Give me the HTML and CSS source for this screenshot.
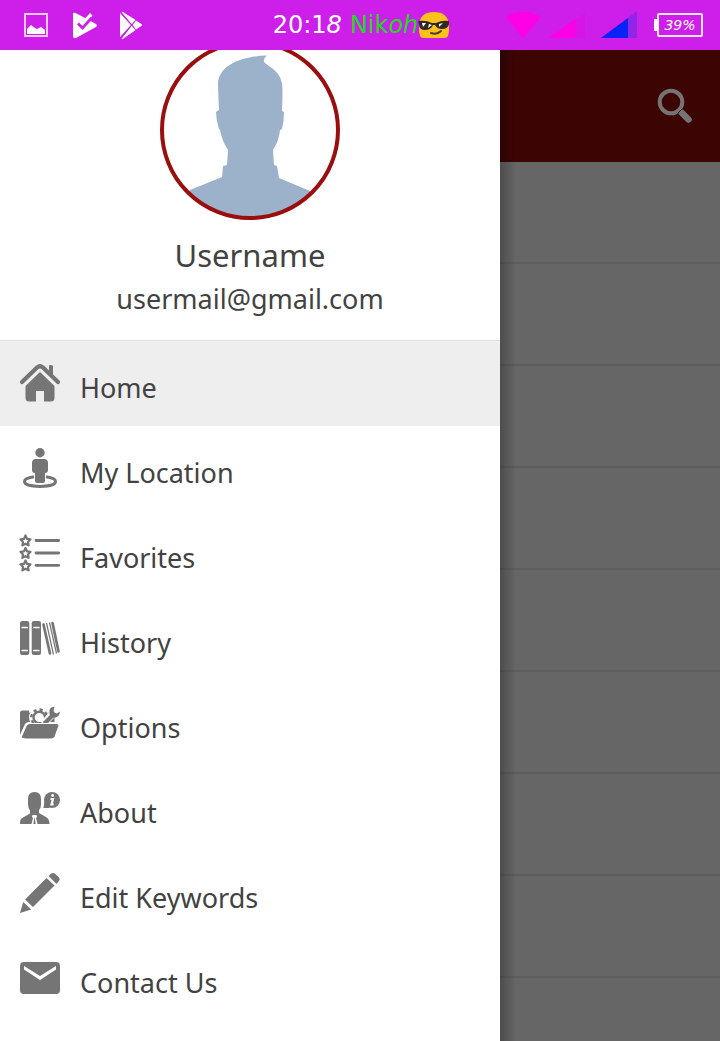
FILE: index.html
```html
<!DOCTYPE html>
<html lang="en">
<head>
<meta charset="utf-8">
<meta name="viewport" content="width=device-width, initial-scale=1">
<title>Navigation drawer</title>
<link rel="stylesheet" href="styles.css">
</head>
<body>
<div class="screen">
  <header class="status">
    <div class="status-left">
      <svg width="32" height="32" viewBox="0 0 32 32"><rect x="5" y="5" width="22" height="22" fill="none" stroke="#f3c8fb" stroke-width="2"/><path d="M7 25v-5l4-4 4 3 2 1 4-2 4 3v4z" fill="#fff"/></svg>
      <svg width="32" height="32" viewBox="0 0 32 32"><path d="M5 5q0-2 2.500-1L16 8.500 17.500 9 22 4l2.500 2.500-3 5L28 15q2 1.500 0 3L8 29q-3 1-3-2z" fill="#fff"/><path d="M10 14.500l4.500 4.500L24 8.500" fill="none" stroke="#cd1fe9" stroke-width="2.800"/></svg>
      <svg width="32" height="32" viewBox="0 0 32 32"><path d="M4 4l11 12L4 28z" fill="#fff"/><path d="M6 3l13 8-3 4zM6 30l13-9-3-4zM20 12l6 4-6 4-3-4z" fill="#fff" stroke="#fff"/><path d="M5 4l14 16M5 29l14-17" stroke="#cd1fe9" stroke-width="1"/></svg>
    </div>
    <div class="clock">
      <span>20:1<i>8</i></span><span class="nick">Nik<i>oh</i></span>
      <svg width="32" height="28" viewBox="0 0 32 28"><path d="M1 16C1 5 7 1 16 1s15 4 15 15-2 11-6 11H7c-4 0-6 0-6-11z" fill="#fcc21b"/><path d="M0 10q8-1 14 2h4q6-3 13-2v3q-1 5-7 5-5 0-7-4h-2q-2 5-8 5-6 0-6-6z" fill="#302821"/><path d="M4 12l4 0-3 4zM11 13l3 1-4 3zM21 13l4-1-4 4z" fill="#fff"/><path d="M13 22q6 2 10-2" fill="none" stroke="#513f35" stroke-width="2" stroke-linecap="round"/></svg>
    </div>
    <div class="status-right">
      <svg width="35" height="27" viewBox="0 0 35 27"><path d="M0 5q17-11 35 0L17 26z" fill="#ff00e6"/></svg>
      <svg width="36" height="28" viewBox="0 0 36 28"><path d="M0 27L36 2v25z" fill="#d914e8"/><path d="M0 27L26 8v19z" fill="#ff00e6"/></svg>
      <svg class="signal-two" width="36" height="28" viewBox="0 0 36 28"><path d="M0 27L36 0v27z" fill="#9126e9"/><path d="M0 27L27 7v20z" fill="#0723f5"/></svg>
      <span class="battery">39%</span>
    </div>
  </header>
  <div class="body">
    <aside class="drawer">
      <section class="profile">
        <svg class="avatar" viewBox="0 0 180 180" role="img" aria-label="Profile picture">
          <defs><clipPath id="round"><circle cx="90" cy="90" r="88"/></clipPath></defs>
          <path clip-path="url(#round)" d="M107 15.500q-4 3-3 6.500c6 6 15 8 18 21q1 6 0 28l2 1q0 9-2 17l-2 1q-1 11-7 20l1 15 3 1 2 12 31 13 30 29H0l30-30 32-13 1-11 4-1 1-15q-6-9-8-20l-1-1q-3-9-3-17l3-2q-1-21-1-27C60 23 86 16 107 15.500z" fill="#9cb1ca"/>
          <circle cx="90" cy="90" r="88" fill="none" stroke="#990f0f" stroke-width="4"/>
        </svg>
        <h1 class="name">Username</h1>
        <p class="mail">usermail@gmail.com</p>
      </section>
      <nav class="menu">
        <a class="item active" href="#home">
          <svg viewBox="0 0 40 40"><path d="M2 19L17 4.500q3-2.500 6 0L38 19" fill="none" stroke="#757575" stroke-width="4.200" stroke-linecap="round" stroke-linejoin="round"/><path d="M29 3q0-1 1.500-1T33 3v12l-4-4zM20 9l14.500 14v12q0 3.500-4 3.500H24V28h-8v10.500H9.500q-4 0-4-3.500V23z"/></svg>
          <span>Home</span></a>
        <a class="item" href="#location">
          <svg viewBox="0 0 40 40"><circle cx="20" cy="4.700" r="4.700"/><path d="M12 15q0-4 4-4h8q4 0 4 4v7q0 3-3 3v8q0 2-2 2h-6q-2 0-2-2v-8q-3 0-3-3z"/><path d="M14 28.800c-7 1-9.500 3-9.500 4.700 0 6.500 31 6.500 31 0 0-1.700-2.500-3.700-9.500-4.700" fill="none" stroke="#757575" stroke-width="3"/></svg>
          <span>My Location</span></a>
        <a class="item" href="#favorites">
          <svg viewBox="0 0 40 40"><defs><path id="star" d="M5.500 0l1.500 3.300 3.500.5-2.500 2.600.6 3.500-3.100-1.700-3.100 1.700.6-3.500L.5 3.800 4 3.300z" fill="none" stroke="#757575" stroke-width="2.200" stroke-linejoin="round"/></defs><use href="#star" x="0" y="2.500"/><use href="#star" x="0" y="15"/><use href="#star" x="0" y="27.500"/><path d="M16 7.500h22.700M16 20h22.700M16 32.300h22.700" stroke="#757575" stroke-width="2.800" stroke-linecap="round"/></svg>
          <span>Favorites</span></a>
        <a class="item" href="#history">
          <svg viewBox="0 0 40 40"><rect y="3" width="9.300" height="34" rx="2.200"/><rect x="11.700" y="3" width="9.300" height="34" rx="2.200"/><path d="M2.200 9.500h5M2.200 32.500h5M13.900 9.500h5M13.900 32.500h5" stroke="#fff" stroke-width="1.700" stroke-linecap="round"/><path d="M23.500 6.500l6.500 29M32.500 5l6 28.500" stroke="#757575" stroke-width="2.700" stroke-linecap="round"/><path d="M26.500 5l7 31.500M29.500 4.500l7 31" stroke="#757575" stroke-width="1.200"/></svg>
          <span>History</span></a>
        <a class="item" href="#options">
          <svg viewBox="0 0 40 40"><g transform="translate(0 4)"><path d="M0 28V6q0-2.500 2.500-2.500H9l2 2h22q1.500 0 1.500 2V15H9q-3 0-4.500 3z"/><path d="M9 0h31v5.500H9z" fill="#fff"/><circle cx="19.300" cy="10.500" r="10.300" fill="#fff"/><circle cx="19.300" cy="10.500" r="5.800" fill="none" stroke="#757575" stroke-width="2.400"/><circle cx="19.300" cy="10.500" r="8" fill="none" stroke="#757575" stroke-width="2.400" stroke-dasharray="3.200 3.083"/><path d="M23 17L35 5" stroke="#fff" stroke-width="7"/><path d="M24 17L35 6" stroke="#757575" stroke-width="4.300"/><path d="M34.500-.5q-6 1-5 6 0 6 6 5 4-1 4.500-6l-3.200 2-3-1v-3z"/><path d="M6 32q-6 0-4.500-3L6 19q1-2.500 4-2.500h26q4 0 2.800 3L35 30q-1 2-4 2z" stroke="#fff" stroke-width="1.200"/></g></svg>
          <span>Options</span></a>
        <a class="item" href="#about">
          <svg viewBox="0 0 40 40"><path d="M8 11q0-7 6.500-7T21 11v5q0 4-2 6v3l7 4q3.500 2 3.500 7H0V34q0-3 3-4.500l7-4v-3Q8 20 8 16z"/><path d="M12.500 27h4l.5 2-1 1 1.500 6h-6l1.500-6-1-1z" fill="#fff"/><path d="M14.500 29l1.200 7h-2.400z"/><circle cx="32" cy="12" r="8"/><path d="M24.500 13l-1 7h6z"/><circle cx="32.600" cy="7.500" r="1.400" fill="#fff"/><path d="M30.500 11H33l-1.500 5.500h2.200" fill="none" stroke="#fff" stroke-width="2.200"/></svg>
          <span>About</span></a>
        <a class="item" href="#keywords">
          <svg viewBox="0 0 40 40"><path d="M28.500 3L31 .7q2-1.400 4 0l4 3.800q1.500 1.500 0 3.500L36.500 11zM26.500 5l8 7.500L13 34l-8-7.500zM3.200 29l8 7.500L0 40z"/></svg>
          <span>Edit Keywords</span></a>
        <a class="item" href="#contact">
          <svg viewBox="0 0 40 40"><rect y="4" width="40" height="32" rx="4"/><path d="M4 8l16 10L36 8v3.500L20 22 4 11.500z" fill="#fff"/></svg>
          <span>Contact Us</span></a>
      </nav>
    </aside>
    <main class="page">
      <div class="toolbar">
        <button class="search" type="button" aria-label="Search"><svg width="38" height="38" viewBox="0 0 38 38"><circle cx="15" cy="15" r="11.300" fill="none" stroke="#747474" stroke-width="4"/><path d="M26 26l6.500 6.500" stroke="#747474" stroke-width="6.500" stroke-linecap="round"/><path d="M21.500 26.500l5-5" stroke="#3d0404" stroke-width="1"/></svg></button>
      </div>
      <ul class="list"><li></li><li></li><li></li><li></li><li></li><li></li><li></li><li></li><li></li></ul>
    </main>
  </div>
</div>
</body>
</html>
```
FILE: styles.css
```css
* { box-sizing: border-box; }

body {
  margin: 0;
  font-family: "Noto Sans", "Open Sans", sans-serif;
  color: #424242;
}

.screen {
  display: flex;
  flex-direction: column;
  height: 100vh;
  overflow: hidden;
}

.status {
  flex: none;
  display: grid;
  grid-template-columns: 1fr auto 1fr;
  align-items: center;
  height: 50px;
  padding: 0 17px 0 20px;
  background: #cd1fe9;
  color: #fff;
}

.status svg { display: block; }

.status-left { display: flex; gap: 16px; }

.clock {
  display: flex;
  align-items: center;
  font-family: "DejaVu Sans", sans-serif;
  font-size: 24px;
  line-height: 32px;
}

.nick { margin-left: 8px; color: #1edb1e; }

.status-right {
  display: flex;
  align-items: center;
  justify-content: flex-end;
  gap: 8px;
}

.signal-two { margin: 0 12px 0 8px; }

.battery {
  position: relative;
  width: 46px;
  border: 2px solid #fbe6ff;
  border-radius: 2px;
  font-family: "DejaVu Sans", sans-serif;
  font-size: 14px;
  font-style: italic;
  line-height: 20px;
  text-align: center;
}

.battery::before {
  content: "";
  position: absolute;
  left: -5px;
  top: 4px;
  width: 4px;
  height: 12px;
  background: #fff;
}

.body {
  flex: 1;
  min-height: 0;
  display: grid;
  grid-template-columns: minmax(0, 500px) minmax(0, 1fr);
}

.drawer { overflow: hidden; background: #fff; }

.profile {
  display: flex;
  flex-direction: column;
  align-items: center;
  margin-top: -10px;
  padding-bottom: 20px;
  border-bottom: 1px solid #e0e0e0;
}

.avatar { width: 180px; height: 180px; }

.name {
  margin: 12px 0 0;
  font-size: 31px;
  font-weight: 400;
  line-height: 46px;
}

.mail {
  margin: 0;
  font-size: 27px;
  line-height: 42px;
}

.item {
  display: flex;
  align-items: center;
  gap: 20px;
  height: 85px;
  padding: 0 20px;
  color: inherit;
  font-size: 27px;
  text-decoration: none;
}

.item svg {
  flex: none;
  width: 40px;
  height: 40px;
  margin-bottom: 2px;
  fill: #757575;
  overflow: visible;
}

.item span { padding-top: 8px; }

.active { background: #eee; }

.page {
  position: relative;
  overflow: hidden;
  background: #666;
}

.page::before {
  content: "";
  position: absolute;
  inset: 0 auto 0 0;
  width: 16px;
  background: linear-gradient(to right, rgba(0, 0, 0, 0.25), rgba(0, 0, 0, 0));
}

.toolbar {
  display: flex;
  align-items: center;
  justify-content: flex-end;
  height: 112px;
  padding-right: 26px;
  background: #3d0404;
}

.search {
  padding: 0;
  border: 0;
  background: none;
}

.search svg { display: block; }

.list { margin: 0; padding: 0; list-style: none; }

.list li { height: 102px; border-bottom: 2px solid #5e5e5e; }
```
